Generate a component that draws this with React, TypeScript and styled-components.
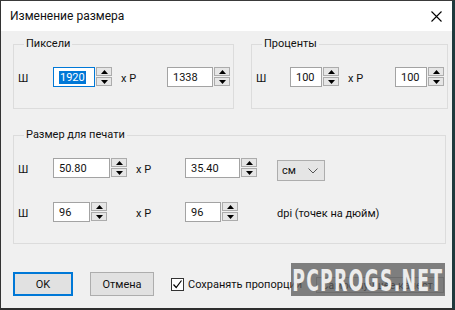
import React from 'react';
import styled, {createGlobalStyle} from 'styled-components';

const Global = createGlobalStyle`
    html, body {
        margin: 0;
        padding: 0;
        background: #ffffff;
    }
    * {
        box-sizing: border-box;
    }
`;

const Window = styled.div`
    position: relative;
    width: 455px;
    height: 310px;
    display: flex;
    flex-direction: column;
    border-top: 1px solid #3a3a3a;
    border-left: 1px solid #333333;
    border-right: 3px solid #1f3a3d;
    border-bottom: 2px solid #2e2e2e;
    font-family: Roboto, "Noto Sans", sans-serif;
    font-size: 11px;
    color: #111;
    overflow: hidden;
`;

const TitleBar = styled.div`
    height: 30px;
    flex: none;
    background: #ffffff;
    display: flex;
    align-items: center;
    justify-content: space-between;
    padding: 0 10px 0 9px;
    font-size: 12px;
`;

const Body = styled.div`
    flex: 1;
    background: #f0f0f0;
    padding: 5px 6px 0 12px;
    display: flex;
    flex-direction: column;
`;

const GroupRow = styled.div<{$top?: number}>`
    display: flex;
    gap: 17px;
    margin-top: ${p => p.$top ?? 0}px;
`;

const Group = styled.fieldset<{$w: number}>`
    width: ${p => p.$w}px;
    margin: 0;
    padding: 15px 3px 21px 4px;
    border: 1px solid #dcdcdc;
    display: flex;
    flex-direction: column;
    gap: 24px;
`;

const Legend = styled.legend`
    margin-left: 6px;
    padding: 0 2px;
    line-height: 16px;
`;

const FieldRow = styled.div<{$cols: string}>`
    display: grid;
    grid-template-columns: ${p => p.$cols};
    align-items: start;
    height: 20px;
`;

const Label = styled.span`
    padding-top: 5px;
    line-height: 14px;
    white-space: nowrap;
`;

const SpinWrap = styled.div`
    display: flex;
    gap: 1px;
`;

const Edit = styled.div<{$w: number; $focus?: boolean}>`
    width: ${p => p.$w}px;
    height: 20px;
    background: #fff;
    border: 1px solid ${p => (p.$focus ? '#0078d7' : '#a3a3a3')};
    padding: 0 0 0 5px;
    display: flex;
    align-items: center;
`;

const Selected = styled.span`
    background: #0078d7;
    color: #fff;
    padding: 0 1px;
    line-height: 13px;
`;

const Spinner = styled.div`
    width: 16px;
    display: flex;
    flex-direction: column;
    gap: 1px;
`;

const SpinBtn = styled.div`
    height: 9px;
    background: #e6e6e6;
    border: 1px solid #acacac;
    display: flex;
    align-items: center;
    justify-content: center;
`;

const Combo = styled.div<{$w: number}>`
    width: ${p => p.$w}px;
    height: 21px;
    background: #e5e5e5;
    border: 1px solid #adadad;
    display: flex;
    align-items: center;
    justify-content: space-between;
    padding: 0 6px 0 4px;
    margin-top: 2px;
    white-space: nowrap;
    overflow: hidden;
`;

const Footer = styled.div`
    display: flex;
    align-items: center;
    margin-top: 28px;
    height: 24px;
`;

const Button = styled.div<{$w: number; $default?: boolean}>`
    width: ${p => p.$w}px;
    height: 24px;
    flex: none;
    background: #e1e1e1;
    border: ${p => (p.$default ? '2px solid #0078d7' : '1px solid #adadad')};
    display: flex;
    align-items: center;
    justify-content: center;
    margin-right: 17px;
`;

const Check = styled.label`
    display: flex;
    flex: none;
    align-items: center;
    gap: 4px;
    white-space: nowrap;
`;

const Box = styled.span`
    width: 13px;
    height: 13px;
    background: #fff;
    border: 1px solid #333;
    display: flex;
    align-items: center;
    justify-content: center;
`;

const QualityCombo = styled(Combo)`
    margin: 2px 2px 0 14px;
    height: 16px;
    flex: 1;
    background: #e8e8e8;
`;

const Watermark = styled.div`
    position: absolute;
    left: 290px;
    top: 262px;
    width: 154px;
    height: 33px;
    background: rgba(90, 90, 90, 0.76);
    display: flex;
    align-items: center;
    justify-content: center;
    overflow: hidden;
`;

const WatermarkText = styled.span`
    font-family: "DejaVu Sans Condensed", "DejaVu Sans", sans-serif;
    font-weight: bold;
    font-size: 31px;
    color: #ececec;
    letter-spacing: 2px;
    transform: scaleX(0.62);
    white-space: nowrap;
`;

const Up = () => (
    <svg width="7" height="4" viewBox="0 0 7 4"><path d="M0 4 L3.5 0 L7 4 Z" fill="#000" /></svg>
);
const Down = () => (
    <svg width="7" height="4" viewBox="0 0 7 4"><path d="M0 0 L3.5 4 L7 0 Z" fill="#000" /></svg>
);

function Spin({value, w, focus}: {value: string; w: number; focus?: boolean}) {
    return (
        <SpinWrap>
            <Edit $w={w} $focus={focus}>{focus ? <Selected>{value}</Selected> : value}</Edit>
            <Spinner>
                <SpinBtn><Up /></SpinBtn>
                <SpinBtn><Down /></SpinBtn>
            </Spinner>
        </SpinWrap>
    );
}

const Chevron = () => (
    <svg width="10" height="6" viewBox="0 0 10 6"><path d="M0.5 0.5 L5 5 L9.5 0.5" fill="none" stroke="#555" strokeWidth="1" /></svg>
);

export default function App() {
    return (
        <>
            <Global />
            <Window>
                <TitleBar>
                    <span>Изменение размера</span>
                    <svg width="11" height="11" viewBox="0 0 11 11">
                        <path d="M0.5 0.5 L10.5 10.5 M10.5 0.5 L0.5 10.5" stroke="#000" strokeWidth="1.1" />
                    </svg>
                </TitleBar>
                <Body>
                    <GroupRow>
                        <Group $w={214}>
                            <Legend>Пиксели</Legend>
                            <FieldRow $cols="35px 68px 46px auto">
                                <Label>Ш</Label>
                                <Spin value="1920" w={42} focus />
                                <Label>x P</Label>
                                <Spin value="1338" w={46} />
                            </FieldRow>
                        </Group>
                        <Group $w={203}>
                            <Legend>Проценты</Legend>
                            <FieldRow $cols="34px 58px 47px auto">
                                <Label>Ш</Label>
                                <Spin value="100" w={32} />
                                <Label>x P</Label>
                                <Spin value="100" w={32} />
                            </FieldRow>
                        </Group>
                    </GroupRow>
                    <GroupRow $top={18}>
                        <Group $w={434}>
                            <Legend>Размер для печати</Legend>
                            <FieldRow $cols="35px 83px 49px 92px auto">
                                <Label>Ш</Label>
                                <Spin value="50.80" w={57} />
                                <Label>x P</Label>
                                <Spin value="35.40" w={55} />
                                <Combo $w={48}>
                                    <span>см</span>
                                    <Chevron />
                                </Combo>
                            </FieldRow>
                            <FieldRow $cols="35px 83px 49px 92px auto">
                                <Label>Ш</Label>
                                <Spin value="96" w={37} />
                                <Label>x P</Label>
                                <Spin value="96" w={36} />
                                <Label>dpi (точек на дюйм)</Label>
                            </FieldRow>
                        </Group>
                    </GroupRow>
                    <Footer>
                        <Button $w={60} $default>OK</Button>
                        <Button $w={64}>Отмена</Button>
                        <Check>
                            <Box>
                                <svg width="11" height="11" viewBox="0 0 11 11">
                                    <path d="M1.5 5.5 L4.2 8.5 L9.5 1.5" fill="none" stroke="#000" strokeWidth="1.2" />
                                </svg>
                            </Box>
                            <span>Сохранять пропорции</span>
                        </Check>
                        <QualityCombo $w={120}>
                            <span>Самое лучшее качест</span>
                            <Chevron />
                        </QualityCombo>
                    </Footer>
                </Body>
                <Watermark>
                    <WatermarkText>PCPROGS.NET</WatermarkText>
                </Watermark>
            </Window>
        </>
    );
}
